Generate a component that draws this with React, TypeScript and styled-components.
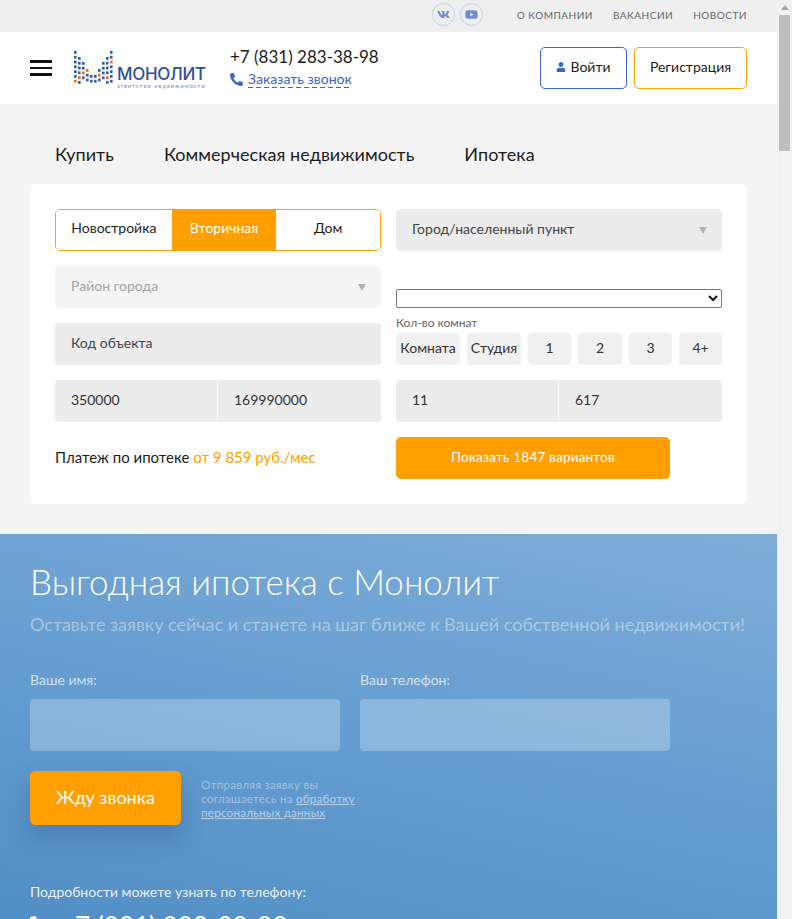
import styled, { createGlobalStyle } from 'styled-components';
import { FaVk, FaYoutube, FaPhoneAlt, FaUser } from 'react-icons/fa';

const ROOMS = ['Комната', 'Студия', '1', '2', '3', '4+'];

// logo dots, one entry per column of the M
const LOGO_COLUMNS = [
  { x: 0, top: 0, bottom: 30 },
  { x: 4, top: 6, bottom: 31 },
  { x: 8, top: 11, bottom: 29 },
  { x: 12, top: 18, bottom: 31 },
  { x: 16, top: 24, bottom: 29 },
  { x: 20, top: 24, bottom: 29 },
  { x: 24, top: 18, bottom: 31 },
  { x: 28, top: 11, bottom: 29 },
  { x: 32, top: 6, bottom: 31 },
  { x: 36, top: 0, bottom: 30 },
];

function LogoMark() {
  const dots: { x: number; y: number; orange: boolean }[] = [];
  LOGO_COLUMNS.forEach((col, c) => {
    let row = 0;
    for (let y = col.top; y <= col.bottom; y += 4.8) {
      dots.push({ x: col.x, y, orange: (c * 3 + row * 5) % 7 === 2 });
      row += 1;
    }
  });
  return (
    <svg width='40' height='34' viewBox='0 0 40 34'>
      {dots.map((d, i) => (
        <rect
          key={i}
          x={d.x + 1}
          y={d.y}
          width='2.6'
          height='2.8'
          fill={d.orange ? '#ee6a2c' : '#3a5ca8'}
        />
      ))}
    </svg>
  );
}

export default function App() {
  return (
    <Page>
      <GlobalStyle />
      <TopBar>
        <Social>
          <SocialLink>
            <FaVk size={13} />
          </SocialLink>
          <SocialLink>
            <FaYoutube size={13} />
          </SocialLink>
        </Social>
        <TopNav>
          <TopNavLink>О компании</TopNavLink>
          <TopNavLink>Вакансии</TopNavLink>
          <TopNavLink>Новости</TopNavLink>
        </TopNav>
      </TopBar>

      <Header>
        <Burger>
          <span />
          <span />
          <span />
        </Burger>
        <Logo>
          <LogoMark />
          <LogoText>
            <LogoName>МОНОЛИТ</LogoName>
            <LogoSub>агентство недвижимости</LogoSub>
          </LogoText>
        </Logo>
        <Contacts>
          <Phone>+7 (831) 283-38-98</Phone>
          <CallRow>
            <FaPhoneAlt size={13} />
            <CallLink>Заказать звонок</CallLink>
          </CallRow>
        </Contacts>
        <HeaderButtons>
          <LoginButton>
            <FaUser size={10} />
            Войти
          </LoginButton>
          <RegisterButton>Регистрация</RegisterButton>
        </HeaderButtons>
      </Header>

      <SearchSection>
        <Tabs>
          <Tab>Купить</Tab>
          <Tab>Коммерческая недвижимость</Tab>
          <Tab>Ипотека</Tab>
        </Tabs>
        <Card>
          <Segmented>
            <Segment $width='116px'>Новостройка</Segment>
            <Segment $active $width='105px'>
              Вторичная
            </Segment>
            <Segment $width='104px'>Дом</Segment>
          </Segmented>
          <Dropdown>
            Город/населенный пункт
            <Caret />
          </Dropdown>
          <Dropdown $disabled>
            Район города
            <Caret />
          </Dropdown>
          <RoomsBlock>
            <NativeSelect />
            <RoomsLabel>Кол-во комнат</RoomsLabel>
            <RoomsGrid>
              {ROOMS.map((room) => (
                <RoomButton key={room}>{room}</RoomButton>
              ))}
            </RoomsGrid>
          </RoomsBlock>
          <CodeField>Код объекта</CodeField>
          <RangeField>
            <RangeCell>350000</RangeCell>
            <RangeCell>169990000</RangeCell>
          </RangeField>
          <RangeField>
            <RangeCell>11</RangeCell>
            <RangeCell>617</RangeCell>
          </RangeField>
          <Payment>
            Платеж по ипотеке&nbsp;<PaymentValue>от 9 859 руб./мес</PaymentValue>
          </Payment>
          <ShowButton>Показать 1847 вариантов</ShowButton>
        </Card>
      </SearchSection>

      <Mortgage>
        <MortgageTitle>Выгодная ипотека с Монолит</MortgageTitle>
        <MortgageSub>
          Оставьте заявку сейчас и станете на шаг ближе к Вашей собственной недвижимости!
        </MortgageSub>
        <FormRow>
          <FormField>
            <FormLabel>Ваше имя:</FormLabel>
            <FormInput />
          </FormField>
          <FormField>
            <FormLabel>Ваш телефон:</FormLabel>
            <FormInput />
          </FormField>
        </FormRow>
        <SubmitRow>
          <SubmitButton>Жду звонка</SubmitButton>
          <Consent>
            Отправляя заявку вы соглашаетесь на <a>обработку персональных данных</a>
          </Consent>
        </SubmitRow>
        <Details>Подробности можете узнать по телефону:</Details>
        <BigPhone>
          <FaPhoneAlt size={20} />
          +7 (831) 283-38-98
        </BigPhone>
      </Mortgage>

      <ScrollTrack>
        <ScrollArrow />
        <ScrollThumb />
      </ScrollTrack>
    </Page>
  );
}

const GlobalStyle = createGlobalStyle`
  html, body {
    margin: 0;
    padding: 0;
  }
  body {
    font-family: Lato, 'Noto Sans', sans-serif;
    color: #1c1c1c;
    background: #fff;
  }
  * {
    box-sizing: border-box;
  }
`;

const Page = styled.div`
  padding-right: 15px;
`;

// the window's scrollbar, which the screenshot keeps
const ScrollTrack = styled.div`
  position: fixed;
  top: 0;
  right: 0;
  bottom: 0;
  width: 15px;
  background: #f1f1f1;
  display: flex;
  flex-direction: column;
  align-items: center;
`;

const ScrollArrow = styled.div`
  margin-top: 5px;
  width: 0;
  height: 0;
  border-left: 4px solid transparent;
  border-right: 4px solid transparent;
  border-bottom: 5px solid #a3a3a3;
`;

const ScrollThumb = styled.div`
  margin-top: 5px;
  width: 11px;
  height: 136px;
  background: #bdbdbd;
`;

const TopBar = styled.div`
  height: 32px;
  background: #efefef;
  display: flex;
  justify-content: flex-end;
  padding: 3px 30px 0 0;
`;

const Social = styled.div`
  display: flex;
  gap: 5px;
  margin-right: 34px;
`;

const SocialLink = styled.a`
  width: 23px;
  height: 23px;
  border: 1px solid #c5d2ea;
  border-radius: 50%;
  display: flex;
  align-items: center;
  justify-content: center;
  color: #6d8ed2;
`;

const TopNav = styled.nav`
  display: flex;
  gap: 20px;
  padding-top: 6px;
`;

const TopNavLink = styled.a`
  font-size: 10px;
  line-height: 13px;
  letter-spacing: 0.5px;
  text-transform: uppercase;
  color: #666;
`;

const Header = styled.header`
  height: 72px;
  background: #fff;
  display: flex;
  align-items: center;
  padding: 0 30px;
`;

const Burger = styled.div`
  width: 22px;
  display: flex;
  flex-direction: column;
  gap: 4px;
  margin-right: 21px;

  span {
    display: block;
    height: 2.5px;
    background: #111;
  }
`;

const Logo = styled.div`
  display: flex;
  align-items: flex-end;
  width: 157px;
  height: 34px;

  svg {
    flex-shrink: 0;
  }
`;

const LogoText = styled.div`
  display: flex;
  flex-direction: column;
  margin-left: 4px;
  margin-bottom: -5px;
`;

const LogoName = styled.div`
  font-family: Inter, Lato, sans-serif;
  font-size: 17px;
  line-height: 18px;
  font-weight: 500;
  letter-spacing: -0.3px;
  color: #2f4f96;
`;

const LogoSub = styled.div`
  font-size: 5.5px;
  line-height: 7px;
  letter-spacing: 1.1px;
  color: #6c80ad;
  white-space: nowrap;
`;

const Contacts = styled.div`
  display: flex;
  flex-direction: column;
  gap: 3px;
  padding-bottom: 2px;
`;

const Phone = styled.div`
  font-size: 17px;
  line-height: 22px;
  color: #1c1c1c;
`;

const CallRow = styled.div`
  display: flex;
  align-items: center;
  gap: 5px;
  color: #3c66c4;
`;

const CallLink = styled.a`
  font-size: 14px;
  line-height: 16px;
  padding-bottom: 1px;
  color: #3c66c4;
  background: repeating-linear-gradient(90deg, #3c66c4 0 5px, transparent 5px 8px) bottom / 100% 1px no-repeat;
`;

const HeaderButtons = styled.div`
  display: flex;
  gap: 7px;
  margin-left: auto;
`;

const HeaderButton = styled.button`
  height: 42px;
  background: #fff;
  border-radius: 5px;
  font-family: inherit;
  font-size: 14px;
  color: #1c1c1c;
  display: flex;
  align-items: center;
  justify-content: center;
  gap: 4px;
  padding: 0 0 3px;
`;

const LoginButton = styled(HeaderButton)`
  width: 87px;
  border: 1px solid #3c66c4;

  svg {
    color: #3c66c4;
  }
`;

const RegisterButton = styled(HeaderButton)`
  width: 113px;
  border: 1px solid #ff9f00;
`;

const SearchSection = styled.section`
  background: #f4f4f4;
  padding: 0 30px 30px;
`;

const Tabs = styled.div`
  height: 80px;
  display: flex;
  align-items: flex-end;
  gap: 50px;
  padding: 0 0 19px 25px;
`;

const Tab = styled.a`
  font-size: 18px;
  line-height: 22px;
  letter-spacing: 0.04px;
  color: #1c1c1c;
`;

const Card = styled.div`
  background: #fff;
  border-radius: 5px;
  padding: 25px;
  display: grid;
  grid-template-columns: 326px 326px;
  grid-auto-rows: 42px;
  column-gap: 15px;
  row-gap: 15px;
`;

const Segmented = styled.div`
  display: flex;
  border: 1px solid #ff9f00;
  border-radius: 5px;
  overflow: hidden;
  height: 42px;
`;

const Segment = styled.div<{ $active?: boolean; $width: string }>`
  width: ${({ $width }) => $width};
  display: flex;
  align-items: center;
  justify-content: center;
  padding-bottom: 5px;
  font-size: 14px;
  background: ${({ $active }) => ($active ? '#ff9f00' : '#fff')};
  color: ${({ $active }) => ($active ? '#fff' : '#1c1c1c')};
`;

const Dropdown = styled.div<{ $disabled?: boolean }>`
  position: relative;
  display: flex;
  align-items: center;
  padding: 0 16px 3px;
  font-size: 14px;
  border-radius: 5px;
  background: ${({ $disabled }) => ($disabled ? '#f4f4f4' : '#ececec')};
  color: ${({ $disabled }) => ($disabled ? '#a3a3a3' : '#444')};
`;

const Caret = styled.span`
  position: absolute;
  right: 15px;
  top: 18px;
  width: 0;
  height: 0;
  border-left: 4.5px solid transparent;
  border-right: 4.5px solid transparent;
  border-top: 7px solid #b0b0b0;
`;

const RoomsBlock = styled.div`
  grid-row: span 2;
  align-self: end;
  display: flex;
  flex-direction: column;
`;

const NativeSelect = styled.select`
  width: 326px;
  height: 19px;
  background: #fff;
  border: 1px solid #767676;
  border-radius: 2px;
  font-family: inherit;
  font-size: 13px;
  color: #111;
`;

const RoomsLabel = styled.div`
  font-size: 12px;
  line-height: 14px;
  color: #666;
  margin: 8px 0 3px;
`;

const RoomsGrid = styled.div`
  display: grid;
  grid-template-columns: 64px 54px 43px 44px 43px 43px;
  column-gap: 7px;
`;

const RoomButton = styled.div`
  height: 32px;
  border-radius: 4px;
  background: #f0f0f0;
  display: flex;
  align-items: center;
  justify-content: center;
  padding-bottom: 3px;
  font-size: 14px;
  color: #333;
`;

const CodeField = styled.div`
  display: flex;
  align-items: center;
  padding: 0 16px 3px;
  background: #ececec;
  border-radius: 4px;
  font-size: 14px;
  color: #444;
`;

const RangeField = styled.div`
  display: grid;
  grid-template-columns: 163px 1fr;
  background: #ececec;
  border-radius: 4px;
`;

const RangeCell = styled.div`
  display: flex;
  align-items: center;
  padding: 0 0 3px 16px;
  font-size: 14px;
  color: #333;

  &:first-child {
    border-right: 1px solid #f8f8f8;
  }
`;

const Payment = styled.div`
  display: flex;
  align-items: center;
  padding-bottom: 3px;
  font-size: 15px;
  color: #1c1c1c;
`;

const PaymentValue = styled.span`
  color: #ff9f00;
`;

const ShowButton = styled.button`
  width: 274px;
  height: 42px;
  border: none;
  border-radius: 5px;
  padding: 0 0 3px;
  background: #ff9f00;
  color: #fff;
  font-family: inherit;
  font-size: 13.5px;
  letter-spacing: 0.2px;
`;

const Mortgage = styled.section`
  height: 560px;
  background: linear-gradient(192deg, #7eadd9 0%, #659dd0 40%, #4585bf 100%);
  padding: 26px 30px 0;
  color: #fff;
`;

const MortgageTitle = styled.h2`
  margin: 0;
  font-size: 35px;
  line-height: 42px;
  font-weight: 300;
  color: #fff;
`;

const MortgageSub = styled.p`
  margin: 9px 0 0;
  font-size: 18px;
  line-height: 26px;
  color: rgba(255, 255, 255, 0.42);
  white-space: nowrap;
`;

const FormRow = styled.div`
  display: flex;
  gap: 20px;
  margin-top: 34px;
`;

const FormField = styled.div`
  width: 310px;
  display: flex;
  flex-direction: column;
  gap: 11px;
`;

const FormLabel = styled.label`
  font-size: 14px;
  line-height: 17px;
  color: rgba(255, 255, 255, 0.72);
`;

const FormInput = styled.input`
  height: 52px;
  border: none;
  border-radius: 4px;
  background: rgba(255, 255, 255, 0.25);
`;

const SubmitRow = styled.div`
  display: flex;
  align-items: flex-start;
  gap: 20px;
  margin-top: 20px;
`;

const SubmitButton = styled.button`
  width: 151px;
  height: 54px;
  border: none;
  border-radius: 5px;
  padding: 0 0 3px;
  background: #ff9f00;
  color: #fff;
  font-family: inherit;
  font-size: 18px;
  box-shadow: 0 12px 24px rgba(40, 70, 110, 0.3);
`;

const Consent = styled.div`
  width: 170px;
  margin-top: 6px;
  font-size: 11.7px;
  line-height: 14px;
  letter-spacing: 0.2px;
  color: rgba(255, 255, 255, 0.42);

  a {
    text-decoration: underline;
    color: rgba(255, 255, 255, 0.55);
  }
`;

const Details = styled.div`
  margin-top: 58px;
  font-size: 14px;
  line-height: 17px;
  color: rgba(255, 255, 255, 0.9);
`;

const BigPhone = styled.div`
  display: flex;
  align-items: center;
  gap: 10px;
  margin-top: 10px;
  font-size: 26px;
  line-height: 32px;
  color: #fff;
`;
